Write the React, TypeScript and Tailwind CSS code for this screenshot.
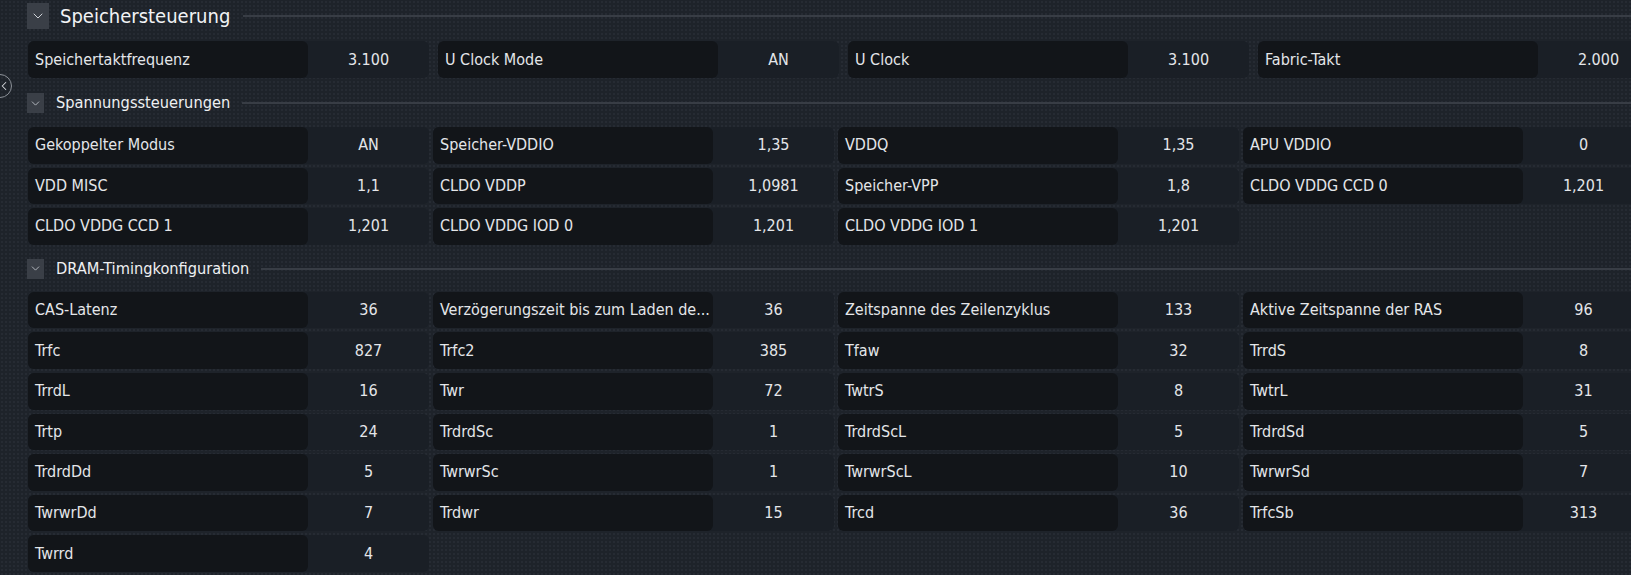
import { ChevronDown, ChevronLeft } from "lucide-react";

type Item = [string, string];

const topRow: Item[] = [
  ["Speichertaktfrequenz", "3.100"],
  ["U Clock Mode", "AN"],
  ["U Clock", "3.100"],
  ["Fabric-Takt", "2.000"],
];

const voltages: Item[] = [
  ["Gekoppelter Modus", "AN"],
  ["Speicher-VDDIO", "1,35"],
  ["VDDQ", "1,35"],
  ["APU VDDIO", "0"],
  ["VDD MISC", "1,1"],
  ["CLDO VDDP", "1,0981"],
  ["Speicher-VPP", "1,8"],
  ["CLDO VDDG CCD 0", "1,201"],
  ["CLDO VDDG CCD 1", "1,201"],
  ["CLDO VDDG IOD 0", "1,201"],
  ["CLDO VDDG IOD 1", "1,201"],
];

const timings: Item[] = [
  ["CAS-Latenz", "36"],
  ["Verzögerungszeit bis zum Laden de...", "36"],
  ["Zeitspanne des Zeilenzyklus", "133"],
  ["Aktive Zeitspanne der RAS", "96"],
  ["Trfc", "827"],
  ["Trfc2", "385"],
  ["Tfaw", "32"],
  ["TrrdS", "8"],
  ["TrrdL", "16"],
  ["Twr", "72"],
  ["TwtrS", "8"],
  ["TwtrL", "31"],
  ["Trtp", "24"],
  ["TrdrdSc", "1"],
  ["TrdrdScL", "5"],
  ["TrdrdSd", "5"],
  ["TrdrdDd", "5"],
  ["TwrwrSc", "1"],
  ["TwrwrScL", "10"],
  ["TwrwrSd", "7"],
  ["TwrwrDd", "7"],
  ["Trdwr", "15"],
  ["Trcd", "36"],
  ["TrfcSb", "313"],
  ["Twrrd", "4"],
];

function Cell({ label, value }: { label: string; value: string }) {
  return (
    <div className="flex h-full min-h-[36.6px] w-[401px] shrink-0 rounded-[6px] bg-[#1a1f26]">
      <div className="flex w-[280px] shrink-0 items-center overflow-hidden whitespace-nowrap rounded-[6px] bg-[#121519] pl-[7px]">
        <span className="text-[16px] text-[#e4e6e9]">{label}</span>
      </div>
      <div className="flex flex-1 items-center justify-center text-[16px] text-[#e4e6e9]">{value}</div>
    </div>
  );
}

function SubHeader({ title }: { title: string }) {
  return (
    <div className="flex h-[20px] items-center">
      <div className="flex h-[20px] w-[17px] items-center justify-center bg-[#3a3f47]">
        <ChevronDown size={13} strokeWidth={1.5} className="text-[#c9cdd3]" />
      </div>
      <span className="ml-[12px] text-[16.25px] leading-none text-[#eef0f2]">{title}</span>
      <div className="ml-[12px] h-[2px] flex-1 bg-[#383d45]" />
    </div>
  );
}

export default function App() {
  return (
    <div
      className="relative h-[575px] w-screen overflow-hidden bg-[#1e232a] bg-[radial-gradient(#262b33_1px,transparent_1px)] bg-[length:4px_4px] pl-[27px]"
      style={{ fontFamily: '"DejaVu Sans Condensed", "Liberation Sans", Arial, sans-serif' }}
    >
      <div className="absolute left-[-12px] top-[74px] flex h-[24px] w-[24px] items-center justify-end rounded-full border-[1.5px] border-[#8d9299]">
        <ChevronLeft size={14} strokeWidth={1.8} className="mr-[0px] text-[#d6d9dd]" />
      </div>

      <div className="mt-[3px] flex h-[26px] items-center">
        <div className="flex h-[26px] w-[22px] items-center justify-center bg-[#3a3f47]">
          <ChevronDown size={16} strokeWidth={1.5} className="text-[#cfd3d8]" />
        </div>
        <span className="ml-[11px] text-[20px] leading-none text-[#f2f3f5]">Speichersteuerung</span>
        <div className="ml-[13px] h-[2px] flex-1 bg-[#383d45]" />
      </div>

      <div className="mt-[12px] flex h-[37px] gap-[9px] pl-[1px]">
        {topRow.map(([l, v]) => (
          <Cell key={l} label={l} value={v} />
        ))}
      </div>

      <div className="mt-[15px]">
        <SubHeader title="Spannungssteuerungen" />
      </div>
      <div className="mt-[14px] grid grid-cols-[repeat(4,401px)] auto-rows-[36.6px] gap-x-[4px] gap-y-[4px] pl-[1px]">
        {voltages.map(([l, v]) => (
          <Cell key={l} label={l} value={v} />
        ))}
      </div>

      <div className="mt-[14px]">
        <SubHeader title="DRAM-Timingkonfiguration" />
      </div>
      <div className="mt-[13px] grid grid-cols-[repeat(4,401px)] auto-rows-[36.6px] gap-x-[4px] gap-y-[4px] pl-[1px]">
        {timings.map(([l, v]) => (
          <Cell key={l} label={l} value={v} />
        ))}
      </div>
    </div>
  );
}
